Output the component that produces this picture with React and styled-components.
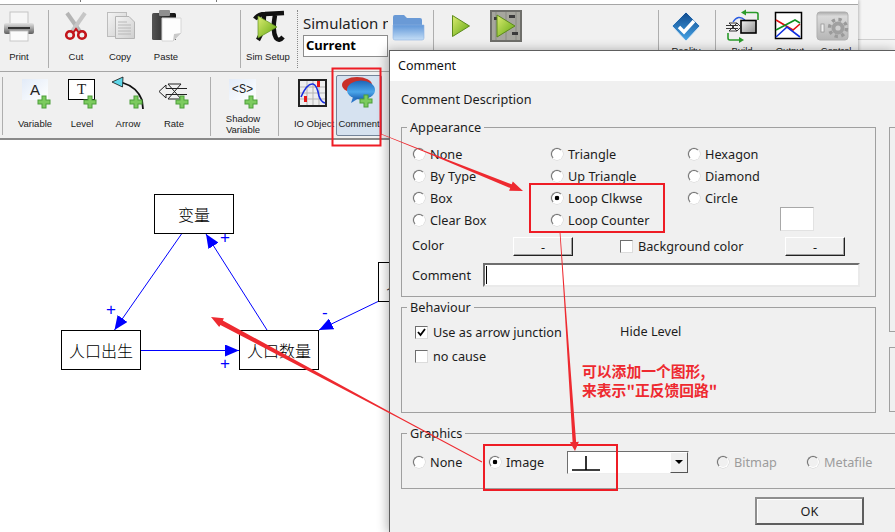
import React from 'react';
import styled, { createGlobalStyle } from 'styled-components';

const UI_FONT = '"Noto Sans", "Liberation Sans", sans-serif';
const LABEL_FONT = '"Liberation Sans", Arial, sans-serif';
const CJK_FONT = '"Noto Sans CJK SC", sans-serif';

const GlobalStyle = createGlobalStyle`
    html, body {
        margin: 0;
        padding: 0;
        width: 895px;
        height: 532px;
        overflow: hidden;
        background: #f4f4f4;
    }
`;

const Page = styled.div`
    position: relative;
    width: 895px;
    height: 532px;
    overflow: hidden;
    background: linear-gradient(#cfcfcf, #cfcfcf) 0 39px / 100% 1px no-repeat, #f4f4f4;
`;

const MainWindow = styled.div`
    width: 858px;
    height: 532px;
    display: flex;
    flex-direction: column;
    background: #f0f0f0;
    box-shadow: 1px 0 3px rgba(0, 0, 0, 0.25);
`;

const TopStrip = styled.div`
    height: 4px;
    flex: none;
    background:
        linear-gradient(#777, #777) 80px 0 / 1px 2px no-repeat,
        linear-gradient(#777, #777) 216px 0 / 1px 2px no-repeat,
        #fff;
    border-bottom: 1px solid #a6a6a6;
`;

const ToolRow = styled.div`
    flex: none;
    height: 66px;
    display: flex;
    align-items: flex-start;
    background: #f0f0f0;
    border-bottom: ${(p) => (p.$last ? '2px solid #8a8a8a' : '1px solid #a6a6a6')};
`;

const ToolItem = styled.div`
    flex: none;
    box-sizing: border-box;
    width: ${(p) => p.$w || 44}px;
    margin-left: ${(p) => p.$ml || 0}px;
    padding-top: 5px;
    display: flex;
    flex-direction: column;
    align-items: center;
`;

const ActiveToolItem = styled(ToolItem)`
    width: 46px;
    height: 61px;
    margin-top: 3px;
    padding-top: 2px;
    background: #d6e2f0;
    border: 1px solid #74849a;
    border-radius: 2px;
`;

const ToolSvg = styled.svg`
    flex: none;
    display: block;
    width: 44px;
    height: 35px;
    overflow: visible;
`;

const ToolLabel = styled.div`
    height: 24px;
    margin-top: ${(p) => (p.$raise ? -6 : 0)}px;
    display: flex;
    align-items: center;
    justify-content: center;
    text-align: center;
    white-space: nowrap;
    font: 9.5px/11.5px ${LABEL_FONT};
    color: #1a1a1a;
`;

const Separator = styled.div`
    flex: none;
    box-sizing: border-box;
    width: 1px;
    height: ${(p) => p.$h || 58}px;
    margin-top: 5px;
    margin-left: ${(p) => p.$ml || 0}px;
    background: #aeaeae;
`;

const DottedSeparator = styled(Separator)`
    background: none;
    border-left: 1px dotted #8a8a8a;
`;

const SimGroup = styled.div`
    flex: none;
    width: 85px;
    margin-left: 5px;
    padding-top: 8px;
    display: flex;
    flex-direction: column;
    gap: 2px;
`;

const SimTitle = styled.div`
    height: 20px;
    overflow: hidden;
    white-space: nowrap;
    font: 15px/20px ${UI_FONT};
    color: #222;
`;

const SimInput = styled.div`
    box-sizing: border-box;
    height: 22px;
    padding-left: 2px;
    background: #fff;
    border: 1px solid #8c8c8c;
    font: bold 13px/19px ${UI_FONT};
    color: #000;
`;

const Canvas = styled.div`
    position: relative;
    flex: 1;
    background: #fff;
`;

const Edges = styled.svg`
    position: absolute;
    left: 0;
    top: 0;
    width: 400px;
    height: 392px;
`;

const Node = styled.div`
    position: absolute;
    left: ${(p) => p.$x}px;
    top: ${(p) => p.$y}px;
    box-sizing: border-box;
    width: 80px;
    height: 40px;
    padding-left: ${(p) => (p.$start ? 7 : 0)}px;
    display: flex;
    align-items: center;
    justify-content: ${(p) => (p.$start ? 'flex-start' : 'center')};
    background: #fff;
    border: 1px solid #000;
    font: 300 16px/1 ${CJK_FONT};
    color: #000;
`;

const Sign = styled.span`
    position: absolute;
    left: ${(p) => p.$x}px;
    top: ${(p) => p.$y}px;
    font: 300 17px/16px ${LABEL_FONT};
    color: #0000ff;
`;

const Dialog = styled.div`
    position: absolute;
    left: 389px;
    top: 50px;
    width: 506px;
    height: 482px;
    overflow: hidden;
    background: #f0f0f0;
    border-top: 1px solid #5e5e5e;
    border-left: 1px solid #5e5e5e;
    box-shadow: -2px 0 10px rgba(0, 0, 0, 0.28);
    font: 12.7px/16px ${UI_FONT};
    color: #1c1c1c;
`;

const TitleBar = styled.div`
    height: 30px;
    padding-left: 8px;
    background: #fff;
    font: 12.5px/30px ${UI_FONT};
    color: #111;
`;

const DialogBody = styled.div`
    width: 560px;
    padding-left: 11px;
`;

const Description = styled.div`
    height: 16px;
    padding-top: 10px;
    margin-bottom: 13px;
`;

const GroupGrid = styled.div`
    display: grid;
    grid-template-columns: 475px 1fr;
    column-gap: 13px;
`;

const LeftColumn = styled.div`
    display: flex;
    flex-direction: column;
    gap: 3px;
`;

const RightColumn = styled.div`
    padding-top: 7px;
    display: flex;
    flex-direction: column;
    gap: 15px;
`;

const EmptyGroup = styled.div`
    height: ${(p) => p.$h}px;
    box-sizing: border-box;
    border: 1px solid #a0a0a0;
`;

const Group = styled.fieldset`
    box-sizing: border-box;
    min-width: 0;
    height: ${(p) => p.$h}px;
    margin: ${(p) => p.$mt || 0}px 0 0;
    padding: 0 11px;
    border: 1px solid #a0a0a0;
`;

const GroupTitle = styled.legend`
    margin-left: -6px;
    padding: 0 3px;
    font: 12.7px/14px ${UI_FONT};
`;

const RadioGrid = styled.div`
    margin-top: 9px;
    display: grid;
    grid-template-columns: 138px 137px 92px 34px;
    grid-auto-rows: 22px;
    align-items: center;
`;

const OptionLabel = styled.div`
    display: flex;
    align-items: center;
    gap: ${(p) => p.$gap || 5}px;
    white-space: nowrap;
    color: ${(p) => (p.$disabled ? '#9c9c9c' : 'inherit')};
`;

const RadioMark = styled.span`
    flex: none;
    box-sizing: border-box;
    width: 12px;
    height: 12px;
    border-radius: 50%;
    border: 1px solid;
    border-color: #6e6e6e #fff #fff #6e6e6e;
    box-shadow: 0 0 0 0.5px #d0d0d0;
    background: ${(p) =>
        p.$on
            ? 'radial-gradient(circle, #000 0 2px, #fff 2.6px)'
            : p.$disabled
            ? '#f0f0f0'
            : '#fff'};
`;

const CheckMark = styled.span`
    flex: none;
    box-sizing: border-box;
    width: 13px;
    height: 13px;
    display: flex;
    align-items: center;
    justify-content: center;
    background: #fff;
    border: 1px solid;
    border-color: #6e6e6e #dcdcdc #dcdcdc #6e6e6e;
`;

const Swatch = styled.div`
    grid-row: 3 / 5;
    grid-column: 4;
    align-self: end;
    box-sizing: border-box;
    height: 24px;
    background: #fff;
    border: 1px solid;
    border-color: #a8a8a8 #e2e2e2 #e2e2e2 #a8a8a8;
`;

const ColorRow = styled.div`
    margin: 6px 0 0 -1px;
    height: 19px;
    display: flex;
    align-items: flex-start;
`;

const RowLabel = styled.div`
    flex: none;
    width: ${(p) => p.$w}px;
    margin-left: ${(p) => p.$ml || 0}px;
`;

const BackgroundOption = styled(OptionLabel)`
    height: 18px;
`;

const FlatButton = styled.div`
    flex: none;
    box-sizing: border-box;
    width: 60px;
    height: 19px;
    display: flex;
    align-items: center;
    justify-content: center;
    background: #f0f0f0;
    border: 1px solid;
    border-color: #fff #222 #222 #fff;
    box-shadow: inset -1px -1px 0 #a0a0a0;
`;

const CommentRow = styled.div`
    margin: 7px 0 0 -1px;
    display: flex;
    align-items: center;
`;

const CommentInput = styled.div`
    flex: none;
    box-sizing: border-box;
    width: 377px;
    height: 24px;
    display: flex;
    align-items: center;
    padding-left: 1px;
    background: #fff;
    border: 2px solid;
    border-color: #6e6e6e #eaeaea #eaeaea #6e6e6e;
`;

const Caret = styled.span`
    width: 1px;
    height: 18px;
    background: #000;
`;

const BehaviourGrid = styled.div`
    margin-top: 6px;
    display: grid;
    grid-template-columns: 205px 1fr;
    grid-auto-rows: 24px;
    align-items: center;
    padding-left: 2px;
`;

const HideLevel = styled.span`
    margin-top: -2px;
`;

const GraphicsRow = styled.div`
    margin-top: 14px;
    display: flex;
    align-items: center;
    height: 16px;
`;

const GraphicsOption = styled(OptionLabel)`
    width: ${(p) => p.$w}px;
    flex: none;
`;

const Combo = styled.div`
    flex: none;
    box-sizing: border-box;
    width: 122px;
    height: 23px;
    margin-right: 28px;
    display: flex;
    justify-content: space-between;
    background: #fff;
    border: 1px solid;
    border-color: #6e6e6e #eee #eee #6e6e6e;
`;

const ComboButton = styled.div`
    flex: none;
    width: 16px;
    display: flex;
    align-items: center;
    justify-content: center;
    background: #f0f0f0;
    border: 1px solid;
    border-color: #fff #555 #555 #fff;
`;

const ComboArrow = styled.span`
    width: 0;
    height: 0;
    border: 4px solid transparent;
    border-top: 4px solid #000;
    border-bottom: 0;
`;

const OkButton = styled.div`
    box-sizing: border-box;
    width: 109px;
    height: 28px;
    margin: 8px 0 0 354px;
    display: flex;
    align-items: center;
    justify-content: center;
    background: #f0f0f0;
    border: 2px solid;
    border-color: #8e8e8e #5e5e5e #5e5e5e #8e8e8e;
    box-shadow: inset 1px 1px 0 #fff;
`;

const Annotations = styled.svg`
    position: absolute;
    left: 0;
    top: 0;
    width: 895px;
    height: 532px;
    pointer-events: none;
`;

const Note = styled.div`
    position: absolute;
    left: 582px;
    top: 361px;
    font: bold 14.8px/19px ${CJK_FONT};
    color: #ee2a30;
    white-space: nowrap;
`;

// tapered red arrow, stays thin for the first part of its length
function taperedArrow(x0, y0, x1, y1, tail, body, headLen, headW) {
    const len = Math.hypot(x1 - x0, y1 - y0);
    const ux = (x1 - x0) / len;
    const uy = (y1 - y0) / len;
    const nx = -uy;
    const ny = ux;
    const bx = x1 - ux * headLen;
    const by = y1 - uy * headLen;
    const mx = x0 + ux * len * 0.3;
    const my = y0 + uy * len * 0.3;
    const pt = (x, y, k) => `${(x + nx * k).toFixed(1)},${(y + ny * k).toFixed(1)}`;
    return [
        pt(x0, y0, tail / 2),
        pt(mx, my, tail * 0.7),
        pt(bx, by, body / 2),
        pt(bx, by, headW / 2),
        pt(x1, y1, 0),
        pt(bx, by, -headW / 2),
        pt(bx, by, -body / 2),
        pt(mx, my, -tail * 0.7),
        pt(x0, y0, -tail / 2),
    ].join(' ');
}

function ToolIcon({ cx, top, children }) {
    return (
        <ToolSvg viewBox={`${cx - 22} ${top} 44 35`}>
            {children}
        </ToolSvg>
    );
}

function Plus({ x, y }) {
    return (
        <g>
            <rect x={x - 6.5} y={y - 2.5} width="13" height="5" fill="#4d9e3a" />
            <rect x={x - 2.5} y={y - 6.5} width="5" height="13" fill="#4d9e3a" />
            <rect x={x - 5.5} y={y - 1.5} width="11" height="3" fill="#7ccb5e" />
            <rect x={x - 1.5} y={y - 5.5} width="3" height="11" fill="#7ccb5e" />
        </g>
    );
}

function Gradients() {
    return (
        <svg width="0" height="0" style={{ position: 'absolute' }}>
            <defs>
                <linearGradient id="grayBody" x1="0" y1="0" x2="0" y2="1">
                    <stop offset="0" stopColor="#e4e4e4" />
                    <stop offset="1" stopColor="#5f5f5f" />
                </linearGradient>
                <linearGradient id="pageGray" x1="0" y1="0" x2="1" y2="1">
                    <stop offset="0" stopColor="#f4f4f4" />
                    <stop offset="1" stopColor="#cfcfcf" />
                </linearGradient>
                <linearGradient id="clipDark" x1="0" y1="0" x2="1" y2="0">
                    <stop offset="0" stopColor="#555" />
                    <stop offset="1" stopColor="#111" />
                </linearGradient>
                <linearGradient id="greenPlay" x1="0" y1="0" x2="1" y2="1">
                    <stop offset="0" stopColor="#dcec72" />
                    <stop offset="1" stopColor="#5ea60c" />
                </linearGradient>
                <linearGradient id="folderBlue" x1="0" y1="0" x2="0" y2="1">
                    <stop offset="0" stopColor="#5f96d8" />
                    <stop offset="1" stopColor="#c5def6" />
                </linearGradient>
                <linearGradient id="diamondBlue" x1="0" y1="0" x2="0" y2="1">
                    <stop offset="0" stopColor="#0f4a8e" />
                    <stop offset="1" stopColor="#46a4e6" />
                </linearGradient>
                <linearGradient id="boxGray" x1="0" y1="0" x2="1" y2="1">
                    <stop offset="0" stopColor="#f2f2f2" />
                    <stop offset="1" stopColor="#8c8c8c" />
                </linearGradient>
                <linearGradient id="controlGray" x1="0" y1="0" x2="0" y2="1">
                    <stop offset="0" stopColor="#a9a9a9" />
                    <stop offset="0.15" stopColor="#dadada" />
                    <stop offset="1" stopColor="#b5b5b5" />
                </linearGradient>
                <linearGradient id="paleTile" x1="0" y1="0" x2="1" y2="1">
                    <stop offset="0" stopColor="#e2ebf8" />
                    <stop offset="1" stopColor="#ffffff" />
                </linearGradient>
                <linearGradient id="bubbleBlue" x1="0" y1="0" x2="0" y2="1">
                    <stop offset="0" stopColor="#1e66b8" />
                    <stop offset="0.6" stopColor="#4ba6ea" />
                    <stop offset="1" stopColor="#1c62b4" />
                </linearGradient>
            </defs>
        </svg>
    );
}

const R1 = 10;
const R2 = 77;

function App() {
    return (
        <Page>
            <GlobalStyle />
            <Gradients />
            <MainWindow>
                <TopStrip />
                <ToolRow>
                    <ToolItem $w={38}>
                        <ToolIcon cx={19} top={R1}>
                            <rect x="10" y="12" width="18" height="14" fill="#f6f6f6" stroke="#c4c4c4" />
                            <rect x="4" y="23" width="30" height="11" rx="2" fill="url(#grayBody)" />
                            <rect x="8" y="27" width="22" height="2" fill="#333" />
                            <rect x="10" y="31" width="18" height="10" fill="#fbfbfb" stroke="#c8c8c8" />
                        </ToolIcon>
                        <ToolLabel>Print</ToolLabel>
                    </ToolItem>
                    <Separator $ml={10} />
                    <ToolItem $ml={5}>
                        <ToolIcon cx={76} top={R1}>
                            <path d="M67 13 L81 33" stroke="#b4b4b4" strokeWidth="4" />
                            <path d="M85 13 L71 33" stroke="#c6c6c6" strokeWidth="4" />
                            <circle cx="70" cy="35" r="3.8" fill="none" stroke="#c3151b" strokeWidth="2.6" />
                            <circle cx="82" cy="35" r="3.8" fill="none" stroke="#c3151b" strokeWidth="2.6" />
                            <path d="M73 33 L76 29 L79 33" stroke="#c3151b" strokeWidth="2" fill="none" />
                        </ToolIcon>
                        <ToolLabel>Cut</ToolLabel>
                    </ToolItem>
                    <ToolItem>
                        <ToolIcon cx={120} top={R1}>
                            <rect x="107.5" y="12.5" width="19" height="24" fill="url(#pageGray)" stroke="#bdbdbd" />
                            <path d="M115.5 16.5 H129 L134.5 22 V38.5 H115.5 Z" fill="url(#pageGray)" stroke="#b4b4b4" />
                            <path d="M118 22 H127 M118 25 H131 M118 28 H131 M118 31 H131 M118 34 H131" stroke="#b8b8b8" />
                        </ToolIcon>
                        <ToolLabel>Copy</ToolLabel>
                    </ToolItem>
                    <ToolItem $ml={2}>
                        <ToolIcon cx={166} top={R1}>
                            <rect x="152" y="13" width="24" height="27" rx="1.5" fill="url(#clipDark)" />
                            <rect x="159" y="10" width="11" height="6" rx="1" fill="#8f8f8f" />
                            <path d="M162 18 H181 V33 L173 41 H162 Z" fill="#fdfdfd" stroke="#d6d6d6" />
                            <path d="M173 41 L174 34 L181 33 Z" fill="#c9c9c9" />
                        </ToolIcon>
                        <ToolLabel>Paste</ToolLabel>
                    </ToolItem>
                    <Separator $ml={52} />
                    <ToolItem $ml={5}>
                        <ToolIcon cx={268} top={R1}>
                            <path d="M255 19 Q258 14 265 14 L284 13" stroke="#111" strokeWidth="4.5" fill="none" />
                            <path d="M264 15 Q264 30 258 40" stroke="#111" strokeWidth="4.5" fill="none" />
                            <path d="M275 15 Q272 31 276 38 Q279 42 283 37" stroke="#111" strokeWidth="4.5" fill="none" />
                            <polygon points="258,16 277,27 258,38" fill="url(#greenPlay)" stroke="#5f8f22" strokeWidth="0.7" />
                        </ToolIcon>
                        <ToolLabel>Sim Setup</ToolLabel>
                    </ToolItem>
                    <DottedSeparator $ml={7} />
                    <SimGroup>
                        <SimTitle>Simulation name</SimTitle>
                        <SimInput>Current</SimInput>
                    </SimGroup>
                    <ToolItem $w={36} $ml={2}>
                        <ToolIcon cx={408} top={R1}>
                            <path d="M393 17 Q393 15 395 15 H404 L407 18 H420 Q422 18 422 20 V26 H393 Z" fill="#6a9ad6" />
                            <path d="M393 25 H424 V38 Q424 40 422 40 H395 Q393 40 393 38 Z" fill="url(#folderBlue)" stroke="#8db4e2" strokeWidth="0.6" />
                        </ToolIcon>
                    </ToolItem>
                    <Separator $ml={7} />
                    <ToolItem $w={36} $ml={9}>
                        <ToolIcon cx={461} top={R1}>
                            <polygon points="452.5,15.5 469.5,26 452.5,36.5" fill="url(#greenPlay)" stroke="#5c8a1c" />
                        </ToolIcon>
                    </ToolItem>
                    <ToolItem $w={36} $ml={9}>
                        <ToolIcon cx={506} top={R1}>
                            <rect x="491" y="11" width="30" height="30" fill="#a6a69e" stroke="#6e6e6a" strokeWidth="2" />
                            <path d="M496 12 V40 M506 12 V40 M516 12 V40" stroke="#8a8a84" />
                            <rect x="494" y="17" width="5" height="3" fill="#3b3b3b" />
                            <rect x="509" y="15" width="6" height="3" fill="#3b3b3b" />
                            <rect x="512" y="32" width="6" height="3" fill="#3b3b3b" />
                            <polygon points="497,15 515,26 497,37" fill="url(#greenPlay)" stroke="#5c8a1c" />
                        </ToolIcon>
                    </ToolItem>
                    <Separator $ml={134} />
                    <ToolItem $w={36} $ml={9}>
                        <ToolIcon cx={686} top={R1}>
                            <polygon points="686,12 700,26 686,41 672,26" fill="url(#diamondBlue)" stroke="#dce8f4" />
                            <path d="M679 27 L684 32 L694 21" stroke="#fff" strokeWidth="3.4" fill="none" />
                        </ToolIcon>
                        <ToolLabel $raise>Reality</ToolLabel>
                    </ToolItem>
                    <Separator $ml={11} />
                    <ToolItem $ml={4}>
                        <ToolIcon cx={742} top={R1}>
                            <path d="M758 20 V14 Q758 12.5 756 12.5 H746" stroke="#2a9a2a" strokeWidth="1.6" fill="none" />
                            <polygon points="741,12.5 746,9.5 746,15.5" fill="#2a9a2a" />
                            <path d="M728 33 V38 Q728 40 730 40 H739" stroke="#2a9a2a" strokeWidth="1.6" fill="none" />
                            <polygon points="744,40 739,37 739,43" fill="#2a9a2a" />
                            <path d="M733 22 Q738 14 745 20" stroke="#2b5ce0" strokeWidth="1.4" fill="none" />
                            <rect x="741" y="20.5" width="15" height="12.5" fill="url(#boxGray)" stroke="#000" strokeWidth="1.6" />
                            <path d="M729 23 L737 31 M737 23 L729 31 M729 23 H737 M729 31 H737 M726 25.5 H738 M726 28.5 H738 M737 23 L741 27 L737 31" stroke="#222" strokeWidth="0.9" fill="none" />
                        </ToolIcon>
                        <ToolLabel $raise>Build</ToolLabel>
                    </ToolItem>
                    <ToolItem $ml={4}>
                        <ToolIcon cx={790} top={R1}>
                            <rect x="775.5" y="12.5" width="26" height="26" fill="#fff" stroke="#000" strokeWidth="1.5" />
                            <polyline points="776,20 793,30 800,24" stroke="#e01010" strokeWidth="1.6" fill="none" />
                            <polyline points="776,30 795,20 800,23" stroke="#109020" strokeWidth="1.6" fill="none" />
                            <polyline points="776,37 787,27 800,37" stroke="#1030e0" strokeWidth="1.6" fill="none" />
                        </ToolIcon>
                        <ToolLabel $raise>Output</ToolLabel>
                    </ToolItem>
                    <ToolItem $ml={2}>
                        <ToolIcon cx={836} top={R1}>
                            <rect x="817" y="12" width="31" height="28" rx="3" fill="url(#controlGray)" stroke="#b0b0b0" />
                            <circle cx="838" cy="28" r="8.5" fill="none" stroke="#9a9a9a" strokeWidth="3.4" strokeDasharray="3.3 3.4" />
                            <circle cx="838" cy="28" r="6.5" fill="#a0a0a0" />
                            <circle cx="838" cy="28" r="2.6" fill="#d0d0d0" />
                            <rect x="821" y="24" width="3" height="8" fill="#f0f0f0" stroke="#8e8e8e" strokeWidth="0.7" />
                        </ToolIcon>
                        <ToolLabel $raise>Control</ToolLabel>
                    </ToolItem>
                </ToolRow>
                <ToolRow $last>
                    <Separator $ml={2} />
                    <ToolItem $ml={10}>
                        <ToolIcon cx={35} top={R2}>
                            <rect x="22" y="79" width="26" height="21" fill="url(#paleTile)" />
                            <text x="35" y="95" textAnchor="middle" fontFamily="Liberation Sans" fontSize="15" fill="#222">A</text>
                            <Plus x={44} y={102} />
                        </ToolIcon>
                        <ToolLabel>Variable</ToolLabel>
                    </ToolItem>
                    <ToolItem $ml={3}>
                        <ToolIcon cx={82} top={R2}>
                            <rect x="68.5" y="79.5" width="26" height="20" fill="#fff" stroke="#000" />
                            <text x="81.5" y="94" textAnchor="middle" fontFamily="Liberation Serif" fontSize="15" fill="#222">T</text>
                            <Plus x={90} y={102} />
                        </ToolIcon>
                        <ToolLabel>Level</ToolLabel>
                    </ToolItem>
                    <ToolItem $ml={2}>
                        <ToolIcon cx={128} top={R2}>
                            <path d="M122 82.5 Q137 87 142 100 L143 109" stroke="#111" strokeWidth="1.8" fill="none" />
                            <polygon points="112,82 123,77 122.5,87" fill="#5fd8ea" stroke="#111" strokeWidth="0.8" />
                            <Plus x={136} y={102} />
                        </ToolIcon>
                        <ToolLabel>Arrow</ToolLabel>
                    </ToolItem>
                    <ToolItem $ml={2}>
                        <ToolIcon cx={174} top={R2}>
                            <path d="M187 88.5 H166 V85 L159 91.5 L166 98 V94.5 H187" stroke="#222" fill="none" />
                            <path d="M168 84 H181 L168 99 H181 Z" stroke="#222" fill="none" />
                            <Plus x={182} y={102} />
                        </ToolIcon>
                        <ToolLabel>Rate</ToolLabel>
                    </ToolItem>
                    <Separator $ml={14} $h={59} />
                    <ToolItem $ml={10}>
                        <ToolIcon cx={243} top={R2}>
                            <rect x="229" y="79" width="27" height="21" fill="url(#paleTile)" />
                            <text x="242.5" y="93" textAnchor="middle" fontFamily="Liberation Mono" fontSize="12" fill="#222">{'<S>'}</text>
                            <Plus x={251} y={102} />
                        </ToolIcon>
                        <ToolLabel>Shadow<br />Variable</ToolLabel>
                    </ToolItem>
                    <Separator $ml={13} $h={59} />
                    <ToolItem $ml={13}>
                        <ToolIcon cx={314} top={R2}>
                            <rect x="299" y="80" width="27" height="26" fill="#eeeeee" stroke="#222" strokeWidth="2" />
                            <path d="M300 87 H325 M300 93 H325 M300 99 H325 M307 81 V105 M313 81 V105 M319 81 V105" stroke="#b5b5b5" />
                            <path d="M301 97 Q307 83 313 84 Q317 85 319 96 Q321 102 325 103" stroke="#1a2ee0" strokeWidth="1.6" fill="none" />
                            <rect x="317" y="81" width="3" height="6" fill="#e81818" />
                            <rect x="304" y="96" width="3" height="6" fill="#e81818" />
                        </ToolIcon>
                        <ToolLabel>IO Object</ToolLabel>
                    </ToolItem>
                    <ActiveToolItem>
                        <ToolIcon cx={359} top={R2}>
                            <ellipse cx="357" cy="84" rx="15" ry="8" fill="#c9302a" />
                            <polygon points="353,96 351,102 359,97" fill="#2b76c8" />
                            <ellipse cx="361" cy="89" rx="14" ry="9.5" fill="url(#bubbleBlue)" />
                            <Plus x={366} y={100} />
                        </ToolIcon>
                        <ToolLabel>Comment</ToolLabel>
                    </ActiveToolItem>
                </ToolRow>
                <Canvas>
                    <Edges viewBox="0 140 400 392">
                        <defs>
                            <marker id="blueHead" markerUnits="userSpaceOnUse" markerWidth="15" markerHeight="12" refX="14" refY="6" orient="auto">
                                <polygon points="0,0 14,6 0,12" fill="#0000ff" />
                            </marker>
                        </defs>
                        <line x1="181.5" y1="234" x2="114.5" y2="330" stroke="#0000ff" markerEnd="url(#blueHead)" />
                        <line x1="267" y1="330" x2="206" y2="234" stroke="#0000ff" markerEnd="url(#blueHead)" />
                        <line x1="141" y1="350.5" x2="239" y2="350.5" stroke="#0000ff" markerEnd="url(#blueHead)" />
                        <line x1="378" y1="301.5" x2="319" y2="330" stroke="#0000ff" markerEnd="url(#blueHead)" />
                    </Edges>
                    <Node $x={154} $y={54}>变量</Node>
                    <Node $x={61} $y={190}>人口出生</Node>
                    <Node $x={239} $y={190}>人口数量</Node>
                    <Node $x={378} $y={122} $start>人</Node>
                    <Sign $x={106} $y={162}>+</Sign>
                    <Sign $x={220} $y={90}>+</Sign>
                    <Sign $x={220} $y={216}>+</Sign>
                    <Sign $x={322} $y={165}>-</Sign>
                </Canvas>
            </MainWindow>
            <Dialog>
                <TitleBar>Comment</TitleBar>
                <DialogBody>
                    <Description>Comment Description</Description>
                    <GroupGrid>
                        <LeftColumn>
                            <Group $h={177}>
                                <GroupTitle>Appearance</GroupTitle>
                                <RadioGrid>
                                    <OptionLabel><RadioMark />None</OptionLabel>
                                    <OptionLabel><RadioMark />Triangle</OptionLabel>
                                    <OptionLabel><RadioMark />Hexagon</OptionLabel>
                                    <span />
                                    <OptionLabel><RadioMark />By Type</OptionLabel>
                                    <OptionLabel><RadioMark />Up Triangle</OptionLabel>
                                    <OptionLabel><RadioMark />Diamond</OptionLabel>
                                    <span />
                                    <OptionLabel><RadioMark />Box</OptionLabel>
                                    <OptionLabel><RadioMark $on />Loop Clkwse</OptionLabel>
                                    <OptionLabel><RadioMark />Circle</OptionLabel>
                                    <Swatch />
                                    <OptionLabel><RadioMark />Clear Box</OptionLabel>
                                    <OptionLabel><RadioMark />Loop Counter</OptionLabel>
                                </RadioGrid>
                                <ColorRow>
                                    <RowLabel $w={101}>Color</RowLabel>
                                    <FlatButton>-</FlatButton>
                                    <RowLabel $w={47} />
                                    <BackgroundOption><CheckMark /><RowLabel $w={147}>Background color</RowLabel></BackgroundOption>
                                    <FlatButton>-</FlatButton>
                                </ColorRow>
                                <CommentRow>
                                    <RowLabel $w={71}>Comment</RowLabel>
                                    <CommentInput><Caret /></CommentInput>
                                </CommentRow>
                            </Group>
                            <Group $h={113}>
                                <GroupTitle>Behaviour</GroupTitle>
                                <BehaviourGrid>
                                    <OptionLabel>
                                        <CheckMark>
                                            <svg width="11" height="11" viewBox="0 0 11 11">
                                                <path d="M2 5 L4.5 8 L9 2" stroke="#000" strokeWidth="1.8" fill="none" />
                                            </svg>
                                        </CheckMark>
                                        Use as arrow junction
                                    </OptionLabel>
                                    <HideLevel>Hide Level</HideLevel>
                                    <OptionLabel><CheckMark />no cause</OptionLabel>
                                </BehaviourGrid>
                            </Group>
                        </LeftColumn>
                        <RightColumn>
                            <EmptyGroup $h={205} />
                            <EmptyGroup $h={65} />
                        </RightColumn>
                    </GroupGrid>
                    <Group $h={63} $mt={13}>
                        <GroupTitle>Graphics</GroupTitle>
                        <GraphicsRow>
                            <GraphicsOption $w={76}><RadioMark />None</GraphicsOption>
                            <GraphicsOption $w={78}><RadioMark $on />Image</GraphicsOption>
                            <Combo>
                                <svg width="34" height="21" viewBox="0 0 34 21">
                                    <path d="M4 18 H32 M18 4 V18" stroke="#000" strokeWidth="1.6" fill="none" />
                                </svg>
                                <ComboButton><ComboArrow /></ComboButton>
                            </Combo>
                            <GraphicsOption $w={90} $disabled><RadioMark $disabled />Bitmap</GraphicsOption>
                            <GraphicsOption $w={80} $disabled><RadioMark $disabled />Metafile</GraphicsOption>
                        </GraphicsRow>
                    </Group>
                    <OkButton>OK</OkButton>
                </DialogBody>
            </Dialog>
            <Annotations viewBox="0 0 895 532">
                <rect x="332.5" y="68.5" width="48" height="77" fill="none" stroke="#ee1c25" strokeWidth="2" />
                <rect x="530" y="184" width="134" height="48" fill="none" stroke="#ee1c25" strokeWidth="2" />
                <rect x="484" y="445" width="133" height="45" fill="none" stroke="#ee1c25" strokeWidth="2" />
                <polygon points={taperedArrow(381, 134, 523, 191, 0.7, 4, 13, 10)} fill="#ee2a30" />
                <polygon points={taperedArrow(560, 232, 575, 451, 0.8, 3.5, 9, 9)} fill="#ee2a30" />
                <polygon points={taperedArrow(482, 462, 211, 317, 0.8, 5, 12, 10)} fill="#ee2a30" />
            </Annotations>
            <Note>可以添加一个图形,<br />来表示"正反馈回路"</Note>
        </Page>
    );
}

export default App;
